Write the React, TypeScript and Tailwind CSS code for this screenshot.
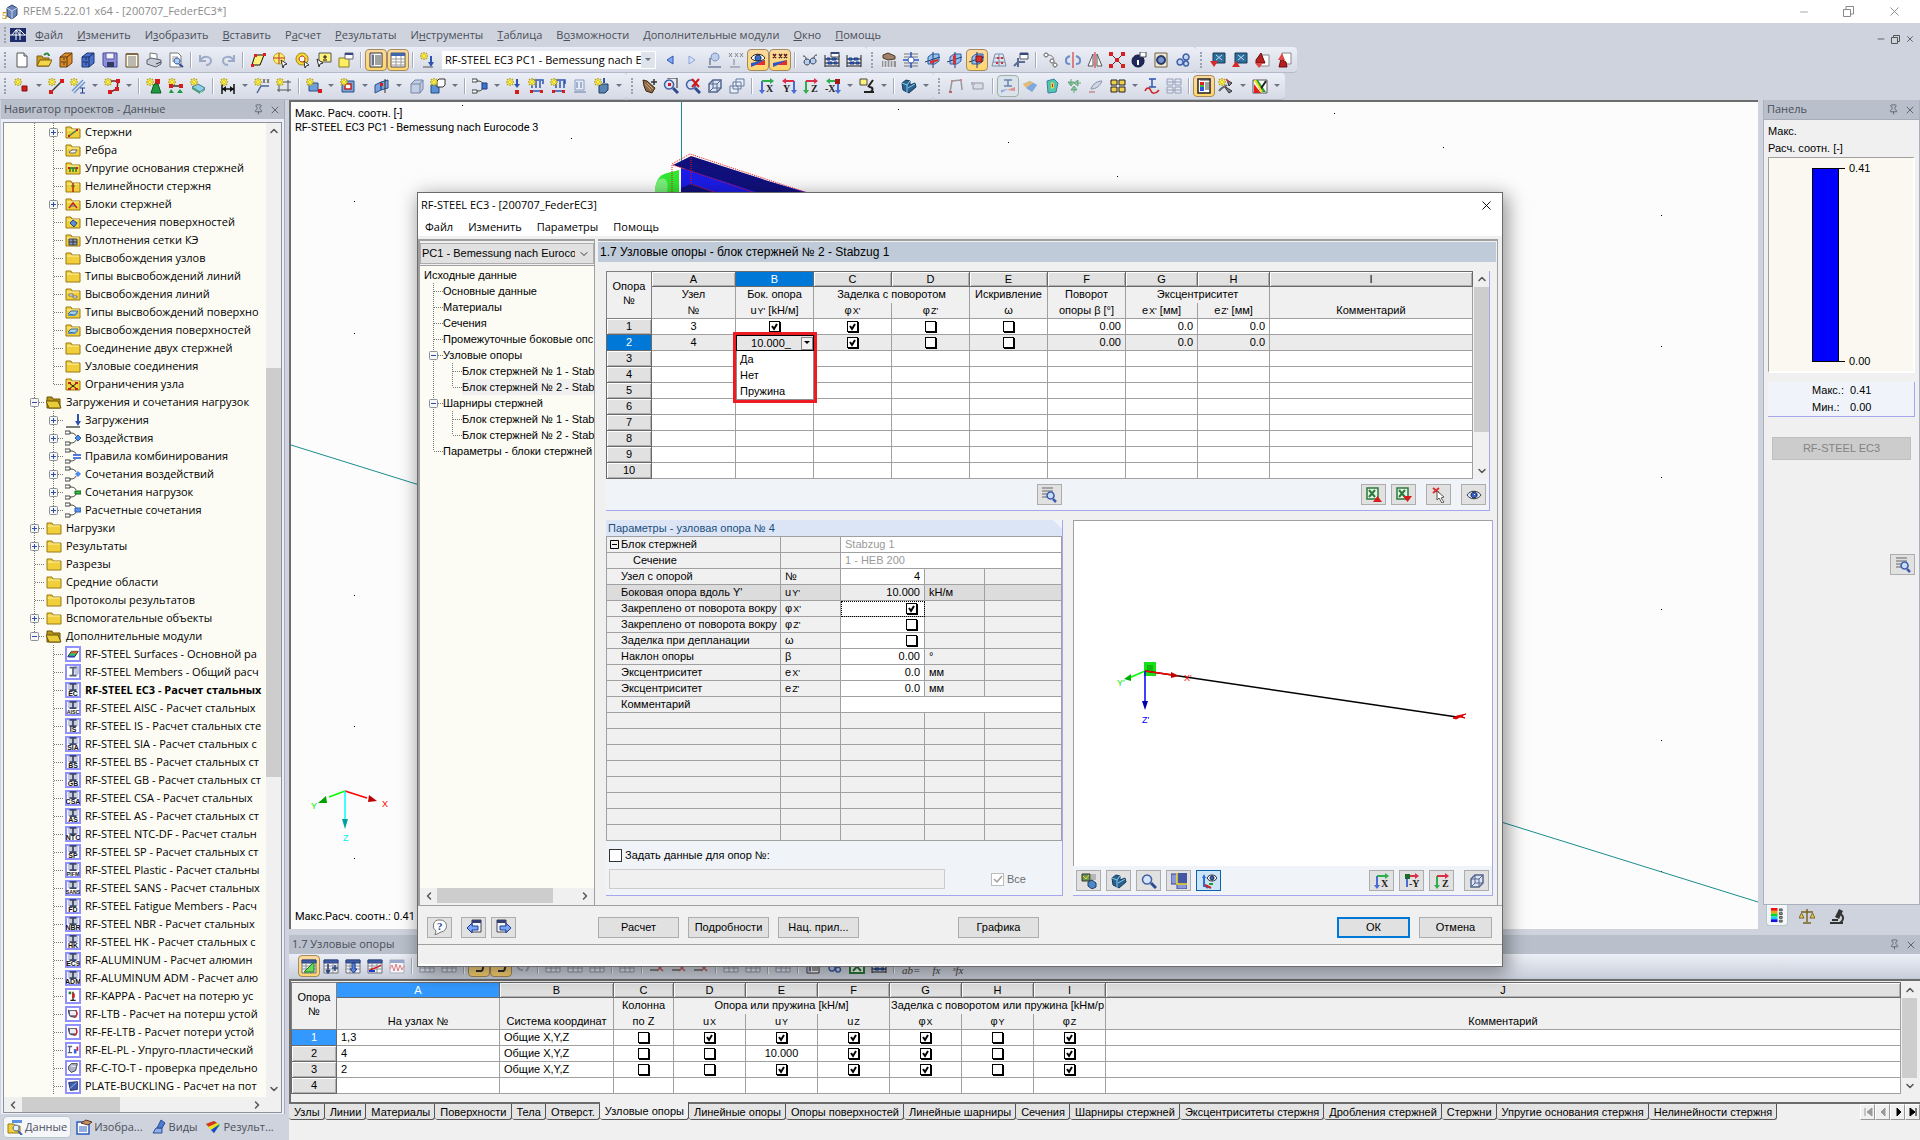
import { useState, type ReactNode } from "react";
import { clsx } from "clsx";
import { ChevronDown, ChevronLeft, ChevronRight, ChevronUp, Minus, Pin, X } from "lucide-react";

/* ---------- icons ---------- */

// one shape: [path, fill, stroke, stroke width]
type Shape = [string, string, string?, number?];
// one label: [text, x, y, size, colour]
type Label = [string, number, number, number, string];

const STAR: Shape[] = [
  ["M4 0v8M0 4h8M1 1l6 6M7 1l-6 6", "none", "#b8a818", 1.5],
  ["M4 1v6M1 4h6M2 2l4 4M6 2l-4 4", "none", "#fff04a", 1],
];
const GRID: Shape[] = [
  ["M1 2h14v13H1z", "#f4f4f4", "#6b6f78"],
  ["M1 2h14v3H1z", "#3c5ba8", "#2c4480"],
  ["M1 8h14M1 11h14M5 5v10M10 5v10", "none", "#8b8f98"],
];
const FOLDER: Shape[] = [
  ["M1 3h5l1 2h8v9H1z", "#f0cf3a", "#9a7a10"],
  ["M2 6h12", "none", "#fff4a8"],
];
const CHAIN: Shape[] = [
  ["M0 1h5v3H0zM0 12h5v3H0z", "#fff", "#444"],
  ["M5 3c4 0 5 1 6 3M5 13c4 0 5-1 6-3", "none", "#333"],
];
const PLANE: Shape[] = [
  ["M3 5l4-3h7v7l-4 3H3z", "#8fc0ee", "#2a5fa8"],
  ["M8 0v16M0 10l15-5", "none", "#223f70"],
];
const ABACUS: Shape[] = [
  ["M1 3v12M15 3v12M1 14h14M1 7h14M1 11h14", "none", "#222"],
  ["M3 6h3v2H3zM8 6h4v2H8zM4 10h4v2H4zM10 10h3v2h-3z", "#2f5fc0", "#1d3f88"],
];
const LENS: Shape[] = [
  ["M10 10l5 5", "none", "#2d4a92", 3],
  ["M6 2a4.500 4.500 0 1 0 .1 0z", "#d4e4fb", "#44609e", 1.5],
];
const CUBE: Shape[] = [
  ["M2 6l4-4h8v8l-4 4H2z", "#dce4f4", "#53658c", 1.5],
  ["M2 6h8l4-4M10 6v8M6 2v8L2 14M6 10h8", "none", "#53658c"],
];
const SOLID: Shape[] = [
  ["M1 5l4-3 4 1v4l5-2 1 4-7 6-6-3z", "#2a628c", "#123a60"],
  ["M1 5l5 2v8M6 7l3-4M7 10l7-4", "none", "#8cc8f0"],
];
const HAND: Shape[] = [["M2 3l5-2 7 3v3l-7 1-5-2z", "#a08068", "#4a3a2c"]];
const RAMP: Shape[] = [
  ["M1 15V11l14-3v1z", "#2b58c8"],
  ["M5 13l10-5v5z", "#e03030"],
];

const axes = (a: string, b: string): Shape[] => [
  ["M3 14V3", "none", b, 2],
  ["M3 3h10", "none", a, 2],
  ["M11 0l4 3-4 3z", a],
  ["M0 12h6l-3 4z", b],
];

const ICONS: Record<string, Shape[]> = {
  new: [["M3 1h7l3 3v11H3z", "#fff", "#555"], ["M10 1v3h3", "#ddd", "#555"]],
  open: [["M1 4h5l1 2h6v8H1z", "#c89c20", "#7c5c10"], ["M1 14l3-6h12l-3 6z", "#f3d548", "#7c5c10"], ["M8 3c3-3 5-1 5 1", "none", "#2a8a3a", 2]],
  cabOrange: [["M2 5l5-4h7v10l-5 4H2z", "#d98c2a", "#6e4210"], ["M2 5h7v10M9 5l5-4M3 10h5M5 7h2M5 12h2", "none", "#5c340c"]],
  cabBlue: [["M2 5l5-4h7v10l-5 4H2z", "#4b73cc", "#1c3470"], ["M2 5h7v10M9 5l5-4M3 10h5M5 7h2M5 12h2", "none", "#14285c"]],
  save: [["M1 1h14v14H3l-2-2z", "#8f8fe0", "#4b4b9a"], ["M4 1h8v6H4z", "#f2f2fb", "#5555a0"], ["M5 10h7v5H5z", "#333a60"]],
  report: [["M2 2h12v13H2z", "#fffbe8", "#5c4320"], ["M4 5h8M4 7h8M4 9h8M4 11h8M4 13h8", "none", "#777"], ["M2 1h12v2H2z", "#80684a"]],
  print: [["M4 1l7 1v6H4z", "#fff", "#777"], ["M1 8l4-2 10 2v4l-5 3-9-3z", "#c9ccd6", "#5a5f70"], ["M10 12l5-2", "none", "#383c4c"]],
  preview: [["M2 1h8l3 3v11H2z", "#fff", "#777"], ["M4 5h6M4 7h6M4 9h4", "none", "#999"], ["M11 12l4 3", "none", "#2d4a92", 2], ["M9 6a3 3 0 1 0 .1 0z", "#a8d0f8", "#2d4a92"]],
  undo: [["M2 3v6h6M2 9c3-6 11-5 11 0 0 3-3 4-5 4", "none", "#9aaac8", 2]],
  redo: [["M14 3v6H8M14 9C11 3 3 4 3 9c0 3 3 4 5 4", "none", "#9aaac8", 2]],
  poly: [["M5 3h9l-4 10H2z", "#fff27a", "#111"], ["M4 2h3v3H4zM13 1h3v3h-3zM1 12h3v3H1z", "#e02020"]],
  pick: [["M7 1a5.500 5.500 0 1 0 .1 0z", "#fff06a", "#b89c20"], ["M1 6h12M7 1v11", "none", "#c03030"], ["M9 8l6 4-3 1-1 3z", "#fff", "#333"]],
  ring: [["M8 1a6 6 0 1 0 .1 0z", "#f6de30", "#9a8210"], ["M8 4a3 3 0 1 0 .1 0z", "#fff", "#c02020"], ["M10 9l5 4-3 1-1 2z", "#fff", "#333"]],
  selpm: [["M3 1h12v9H3z", "#fff27a", "#555"], ["M9 3v4M7 5h4M7 8h4", "none", "#111"], ["M1 7l6 4-3 1-1 3z", "#fff", "#333"]],
  selwin: [["M1 6h10v9H1z", "#ffef60", "#8a7a20"], ["M7 1h8v6H7z", "#fff", "#667"], ["M7 1h8v2H7z", "#334a80"]],
  list: [["M2 1h12v14H2z", "#fff", "#333"], ["M7 4h6M7 6h6M7 8h6M7 10h6M7 12h6", "none", "#444"], ["M3 2h3v12H3z", "#b4c2e4"], ["M4 4h2M4 6h2M4 8h2M4 10h2M4 12h2", "none", "#222"]],
  tableIcon: [["M1 1h14v14H1z", "#fff", "#555"], ["M1 1h14v3H1z", "#3f66b0"], ["M1 7h14M1 10h14M1 13h14M6 4v11M11 4v11", "none", "#999"]],
  loadstar: [...STAR, ["M11 4v8", "none", "#2d55b0", 2], ["M8 10h6l-3 5z", "#2d55b0"], ["M3 15h10", "none", "#555"]],
  prev: [["M11 4v8L5 8z", "#86aaf0", "#2d55c0"]],
  next: [["M5 4v8l6-4z", "#d5e2f8", "#8aa2d8"]],
  eyeDown: [["M9 1a4 4 0 1 0 .1 0z", "#bcd0ee", "#7a90b8"], ["M4 6v7M2 15h13", "none", "#8c98b0", 2]],
  xxxDown: [["M1 1l3 4M4 1L1 5M7 1l3 4M10 1L7 5M12 1l3 4M15 1l-3 4", "none", "#888"], ["M6 7v6M2 15h10", "none", "#9aa2b4", 1.5]],
  eye: [["M1 6c3-5 11-5 14 0-3 4-11 4-14 0z", "#fff", "#222"], ["M8 3a3 3 0 1 0 .1 0z", "#3a6cd0", "#123"], ...RAMP],
  xxx: [["M1 2l3 4M4 2L1 6M7 2l3 4M10 2L7 6M12 2l3 4M15 2l-3 4", "none", "#5a2020", 1.5], ...RAMP],
  glasses: [["M1 4c3 0 3 2 3 4M15 3c-3 0-3 2-3 4", "none", "#333"], ["M5 7a3 3 0 1 0 .1 0zM11 6a3 3 0 1 0 .1 0z", "#b8cdf0", "#345"]],
  abacusDoc: [...ABACUS, ["M7 0h8v5H7z", "#fff", "#445"], ["M7 0h8v2H7z", "#334a80"]],
  abacus: ABACUS,
  gridHand: [["M1 10h14M1 12h14M1 14h14", "none", "#444", 1], ["M3 9v7M6 9v7M9 9v7M12 9v7", "none", "#fff"], ...HAND],
  gridPoint: [["M1 2h14M1 5h14M1 11h14M1 14h14", "none", "#777", 1], ["M8 0v16M0 8h16", "none", "#2d55c0", 1.5], ["M8 5a3 3 0 1 0 .1 0z", "#fff", "#2d55c0"]],
  planeX: [...PLANE, ["M5 9l8-2v2l-8 3z", "#d83030"]],
  planeY: [...PLANE, ["M6 4l3-2v9l-3 2z", "#d83030"]],
  planeZ: [...PLANE, ["M7 4h6v6H7z", "#d83030", "#7a1010"]],
  net: [["M4 2h8l3 12H1zM3 6h10M2 10h12M8 2v12", "none", "#7a8eb0"], ["M6 5h2v2H6zM10 5h2v2h-2zM5 10h2v2H5zM10 10h2v2h-2z", "#d83030"]],
  axesDoc: [["M5 15V6M5 10h7M5 10l-4 4", "none", "#5a6c94", 2], ["M7 1h8v6H7z", "#fff", "#556"], ["M7 1h8v2H7z", "#334a80"]],
  chain: [["M3 1a2 2 0 1 0 .1 0zM9 7a2 2 0 1 0 .1 0zM12 11a2 2 0 1 0 .1 0z", "#fff", "#555"], ["M5 3c4 0 5 2 6 4", "none", "#777"]],
  rotate: [["M8 0v16", "none", "#d02020"], ["M5 4c-6 2-5 8 0 8M11 4c6 2 5 8 0 8", "none", "#6a8cc8", 2]],
  mirror: [["M6 2v12H1zM10 2v12h5z", "#fff", "#555"], ["M8 0v16", "none", "#d02020"]],
  explode: [["M2 2l12 12M14 2L2 14", "none", "#333"], ["M0 0h4v4H0zM12 0h4v4h-4zM0 12h4v4H0zM12 12h4v4h-4zM6 6h4v4H6z", "#d82020"]],
  info: [["M7 3a6 6 0 1 0 .1 0z", "#20285c", "#10153a"], ["M7 8v5", "none", "#fff", 2], ["M9 0h6v5H9z", "#fff", "#445"]],
  gear: [["M2 1h12v14H2z", "#f2e8d0", "#6c6048"], ["M8 4a4 4 0 1 0 .1 0z", "#7895cc", "#283c70", 2]],
  cogs: [["M5 7a3 3 0 1 0 .1 0zM11 2a3 3 0 1 0 .1 0zM11 9a2.500 2.500 0 1 0 .1 0z", "#c4d4f4", "#3c5ca4", 1.5]],
  down1: [["M3 1h12v10H3z", "#2f6f9c", "#173a58"], ["M6 3l6 5M12 3L6 8", "none", "#bfe0f8"], ["M0 9h8l-4 6z", "#d82828"]],
  up1: [["M3 1h12v10H3z", "#2f6f9c", "#173a58"], ["M6 3l6 5M12 3L6 8", "none", "#bfe0f8"], ["M0 15h8l-4-6z", "#d82828"]],
  red1: [["M6 3h9v11H6z", "#fff", "#888"], ["M2 8l5-7 4 10H2z", "#b82020", "#6a1010"], ["M1 11h8l-4 5z", "#e04848"]],
  red2: [["M6 1h9v11H6z", "#fff", "#888"], ["M3 15l2-8 5 3 1 5z", "#b82020", "#6a1010"], ["M2 8l4-7 3 7z", "#e04848"]],
  node: [...STAR, ["M8 8h5v5H8z", "#d81c1c", "#801010"]],
  line: [...STAR, ["M3 14L14 3", "none", "#333", 1.5], ["M1 12h4v4H1zM12 1h4v4h-4z", "#d81c1c"]],
  member: [...STAR, ["M2 13L13 2M4 15L15 4", "none", "#6e96d0", 1.5], ["M10 10h5M12.500 10v5M10 15h5", "none", "#223f88"]],
  opening: [...STAR, ["M7 3h7l-1 8-7 3", "none", "#7a2020", 1.5], ["M12 1h4v4h-4zM11 9h4v4h-4zM4 12h4v4H4z", "#d81c1c"]],
  support: [["M9 1h5v5H9z", "#d81c1c"], ["M5 15l3-9h4l3 9z", "#1f9a40", "#0c5a20"], ...STAR],
  hinge: [...STAR, ["M2 8h13", "none", "#333", 1.5], ["M1 6h4v4H1zM11 6h4v4h-4z", "#d81c1c"], ["M1 15l2-4 3 4zM9 15l3-4 3 4z", "#1f9a40"]],
  surface: [["M2 9l6-3 7 4-5 4z", "#8cd0e8", "#3a7c98"], ["M2 9v2l8 5v-2zM10 16l5-4v-2", "#4aa070"], ...STAR],
  dim: [["M2 6v10M14 6v10M2 11h12", "none", "#111", 1.5], ["M2 11l4-3v6zM14 11l-4-3v6z", "#111"], ...STAR],
  dimXX: [...STAR, ["M9 1l2 4M11 1L9 5M13 1l2 4M15 1l-2 4", "none", "#666"], ["M3 15l4-7h8", "none", "#4a6496", 1.5]],
  guide: [["M3 2v12M12 2v12M1 4h14M1 12h14", "none", "#555"], ...STAR],
  rectLoad: [["M3 5h9v8H3z", "#6f9fd8", "#2a4f88"], ["M12 11h4v4h-4z", "#d81c1c"], ...STAR],
  frame: [["M2 3h12v11H2z", "#7aa4dc", "#2a4f88"], ["M5 6h6v5H5z", "#fff", "#c02020", 1.5], ...STAR],
  fold: [["M1 7l6-3v8l-6 3zM7 4l7-2v8l-7 2z", "#7aa4dc", "#2a4f88"], ["M11 1v14", "none", "#333"], ["M6 5h3v3H6z", "#d81c1c"]],
  block: [["M3 6l4-4h8v9l-3 4H3z", "#c4cee2", "#7484a8"], ["M3 6h9l3-4M12 6v9", "none", "#7484a8"]],
  block2: [["M1 7h8v8H1z", "#5a90d4", "#224a88"], ["M7 3l2-2h6v6l-2 2H7z", "#fff", "#333"], ...STAR],
  comb: [...CHAIN, ["M10 5h5v6h-5z", "#3c74d0", "#1c3c80"]],
  load1: [...STAR, ["M11 1v7", "none", "#2d55b0", 2], ["M8 6h6l-3 4z", "#2d55b0"], ["M9 12h4v4H9z", "#d81c1c"]],
  load2: [["M3 2h12v4M4 3v7M8 3v7M12 3v7M2 13h13", "none", "#2d55b0", 1.5], ["M2 12h3v3H2zM12 12h3v3h-3z", "#d81c1c"], ...STAR],
  load3: [["M5 2h10v4M6 3v7M10 3v7M14 3v7M2 13h13", "none", "#2d55b0", 1.5], ["M2 12h3v3H2zM12 12h3v3h-3z", "#d81c1c"], ...STAR],
  load4: [["M3 2h9v10H3z", "#e6ecf6", "#8a9cc0"], ["M5 4v6M9 4v6M2 14h12", "none", "#8a9cc0", 1.5]],
  cubeLoad: [["M5 8l3-2h6v6l-3 3H5z", "#5a84b4", "#1f3c60"], ["M10 0v5", "none", "#2d55b0", 2], ...STAR],
  hand: [["M2 2l4 1 8 7-3 5-6-2-2-5z", "#8a6a4a", "#3c2810"], ["M10 4h6M13 1v6", "none", "#333", 1.5], ["M4 6l6 6M6 5l6 6", "none", "#d0a070", 1]],
  zoomRect: [...LENS, ["M4 0h10v10", "none", "#222"], ["M5 5h3v3H5z", "#d81c1c"]],
  zoomX: [...LENS, ["M7 1l7 8M14 1L7 9", "none", "#d01818", 2]],
  lens: LENS,
  cube: CUBE,
  cubes: [["M7 1h8v7H7zM4 4h8v7H4zM1 8h8v7H1z", "#e8eefa", "#66789c"]],
  axX: axes("#2fae4c", "#4a6cd8"),
  axY: [["M13 14V3", "none", "#4a6cd8", 2], ["M13 3H4", "none", "#d83048", 2], ["M5 0L1 3l4 3z", "#d83048"], ["M10 12h6l-3 4z", "#4a6cd8"]],
  axZ: axes("#d83048", "#2fae4c"),
  axMX: [["M13 14V3", "none", "#4a6cd8", 2], ["M13 3H4", "none", "#2fae4c", 2], ["M5 0L1 3l4 3z", "#2fae4c"], ["M10 1h5v5h-5z", "#a01818"], ["M10 12h6l-3 4z", "#4a6cd8"]],
  axMY: [["M3 14V3", "none", "#4a6cd8", 2], ["M3 3h10", "none", "#d83048", 2], ["M11 0l4 3-4 3z", "#d83048"], ["M1 1h5v5H1z", "#1a6a2c"]],
  scope: [["M14 2L9 9M5 14h10M10 9c5 0 4 4 1 5", "none", "#222", 2], ["M1 1h7v6H1z", "#fff27a", "#444"]],
  solid: SOLID,
  portal: [["M2 14l2-11 9-1 1 10", "none", "#999", 1.5], ["M3 2h2v2H3zM12 1h2v2h-2z", "#c88"], ["M1 13h3v2H1z", "#b66"]],
  conveyor: [["M3 5h10v6H3z", "#d9dde6", "#9298a8"], ["M1 4h4v3H1z", "#b0b6c6"]],
  beamI: [["M4 2h8M8 2v6M4 8h8", "none", "#6a84b0", 1.5], ["M1 15V12l7-1z", "#96a8e0"], ["M7 12l8-3v4z", "#e09090"]],
  rainbow: [["M1 6l7-3 7 4-5 7z", "#78cc90"], ["M1 6l7-3 3 2-7 5z", "#e8b878"], ["M4 10l7-5 4 2-5 7z", "#80a8e0"]],
  rainbow2: [["M3 3l7-2 4 4-2 9-8 1z", "#50c8b0", "#3a80a0"], ["M7 4l3 1v5l-3 1z", "#f0d040"], ["M8 6h1v3H8z", "#e02020"]],
  greenArrows: [["M5 1v5M2 4l3 4 3-4zM15 5h-4M12 2L8 5l4 3zM8 15v-4M5 12l3-4 3 4z", "#8cc8a0", "#62a47a"]],
  blade: [["M3 11c2-6 7-8 11-8-2 5-6 8-11 8z", "#cfd6e4", "#8892ac"], ["M1 14h6", "none", "#c06060"]],
  squares: [["M1 2h6v5H1zM9 2h6v5H9zM1 9h6v5H1zM9 9h6v5H9z", "#f0cf4a", "#222"]],
  iWave: [["M5 1h7M8 1v8M5 9h7", "none", "#2d55b0", 1.5], ["M1 13c2-5 5-3 6 0s5 3 8-1", "none", "#d02020", 1.5]],
  tables: [["M1 1h6v6H1zM9 1h6v6H9zM1 9h6v6H1zM9 9h6v6H9z", "#e4e8f2", "#96a0b8"], ["M1 4h14M1 12h14", "none", "#96a0b8"]],
  legend: [["M2 1h12v14H2z", "#fff", "#222", 1.5], ["M4 4h4v3H4z", "#e02020"], ["M4 7h4v2H4z", "#30c040"], ["M4 9h4v4H4z", "#3050e0"], ["M9 5h4M9 7h4M9 9h4M9 11h4M4 2h9", "none", "#444"]],
  lamps: [["M9 2l5 3-3 3zM6 8l8 5-3 2z", "#7a86a0", "#333"], ["M1 13c3-4 5-4 8-6", "none", "#666", 2], ["M8 1l3 3", "none", "#d04040", 1.5], ...STAR],
  palette: [["M1 2h14v13H1z", "#fff", "#555"], ["M2 2h4l8 12h-4z", "#20a030"], ["M2 6l7 9H2z", "#e02020"], ["M14 3L8 12", "none", "#222", 2], ["M3 2l7 12", "none", "#f0e020", 2]],
  grTri: [...GRID, ["M13 4v10H3z", "#6ad85c", "#1c7a1c"]],
  grPM: [...GRID, ["M5 6v8M3 12l2 3 2-3M9 10h6M12 7v6", "none", "#2c4480", 1.5]],
  grDown: [...GRID, ["M7 5h3v6h2l-3.500 4L5 11h2z", "#5a84e0", "#1c3c88"]],
  grRamp: [...GRID, ["M2 13c4-4 8-2 12-6", "none", "#d02020", 1.5], ["M2 13h6", "none", "#1c3cd8", 2]],
  grWave: [["M1 2h14v13H1z", "#f6f6fa", "#a9aeba"], ["M1 2h14v3H1z", "#9aa8cc"], ["M1 11l2-4 2 6 2-7 2 7 2-6 2 5 2-4", "none", "#e08080"]],
  grPlain: [["M1 2h14v12H1z", "#e9ecf4", "#8d96ac"], ["M1 6h14M1 10h14M6 2v12M11 2v12", "none", "#8d96ac"]],
  swirl: [["M3 3c8 0 11 4 8 10M11 13H5", "none", "#333", 2]],
  swirlOff: [["M5 3c-4 4-3 9 3 9M8 3c6 2 7 6 3 10", "none", "#a0a8ba", 2]],
  rowDel: [["M1 12h8", "none", "#888", 2], ["M8 7l6 6M14 7l-6 6", "none", "#c06060", 1.5]],
  excel: [["M1 1h14v14H1z", "#fff", "#2a7a3a", 2], ["M4 4l8 9M12 4l-8 9", "none", "#2a7a3a", 2]],
  excelUp: [["M1 1h11v11H1z", "#e8f4e8", "#2a7a3a", 1.5], ["M3 3l6 7M9 3l-6 7", "none", "#2a7a3a", 2], ["M7 15h9l-4.500-6z", "#d81c1c"]],
  excelDown: [["M1 1h11v11H1z", "#e8f4e8", "#2a7a3a", 1.5], ["M3 3l6 7M9 3l-6 7", "none", "#2a7a3a", 2], ["M7 9h9l-4.500 6z", "#d81c1c"]],
  pickNode: [["M2 1l6 5M8 1L2 6", "none", "#d83030", 2], ["M6 4l7 6-3 1 3 4-2 1-3-5-2 2z", "#fff", "#555"]],
  eyeSmall: [["M1 8c3-5 11-5 14 0-3 5-11 5-14 0z", "#d8e4fa", "#444"], ["M8 5a3 3 0 1 0 .1 0z", "#3a60d0", "#123"], ["M8 7h1v1H8z", "#fff"]],
  find: [["M1 1h11M1 4h11M1 7h5M1 10h5", "none", "#666", 1], ["M12 12l3 3", "none", "#3c5cae", 2.500], ["M9.500 5a3.500 3.500 0 1 0 .1 0z", "#c8dcf8", "#3c5cae", 1.5]],
  render: [["M1 1h8v7H1z", "#6a9a50", "#333"], ["M2 3l3 3 3-4", "none", "#f0d040"], ["M9 2h6M9 4h6M9 6h6", "none", "#888"], ["M7 9l4-2 4 3v4l-4 2-4-3z", "#4a88c8", "#1c3c60"]],
  blueWin: [["M0 1h8v10H0z", "#8c98dc", "#3c4890"], ["M6 11h10v5H6z", "#8c98dc", "#3c4890"], ["M6 0h10v11H6z", "#4656a4"], ["M6 0v11h10", "none", "#f0e020", 1.5]],
  axesEye: [["M3 14V4M3 12l4 3", "none", "#2d6cd8", 2], ["M1 5l2-4 2 4z", "#2d6cd8"], ["M8 11h4", "none", "#20a030", 2], ["M4 12l6 3", "none", "#d02020", 2], ["M6 5c2-4 8-4 10 0-2 4-8 4-10 0z", "#fff", "#223"], ["M11 3a2 2 0 1 0 .1 0z", "#3a60d0", "#123"]],
  help: [["M8 1a6 6 0 0 1 1 12l-6 3 1-4A6 6 0 0 1 8 1z", "#fff", "#777"]],
  pagePrev: [["M6 1h9v12H6z", "#f4f6fc", "#445"], ["M6 1h9v3H6z", "#333f70"], ["M1 9l5-5v3h6v4H6v3z", "#7aa4f4", "#1c3c98"]],
  pageNext: [["M1 1h9v12H1z", "#f4f6fc", "#445"], ["M1 1h9v3H1z", "#333f70"], ["M15 9l-5-5v3H4v4h6v3z", "#7aa4f4", "#1c3c98"]],
  legendBars: [["M1 0h7v3H1z", "#f01010"], ["M1 3h7v3H1z", "#f0a010"], ["M1 6h7v3H1z", "#10d020"], ["M1 9h7v3H1z", "#10d0f0"], ["M1 12h7v3H1z", "#1010e0"], ["M10 1h3v2h-3zM10 5h3v2h-3zM10 9h3v2h-3zM10 13h3v2h-3z", "#aaa", "#444"]],
  scales: [["M8 1v13M4 15h8M2 4h12", "none", "#7a6420", 1.5], ["M0 10l2.500-5L5 10zM11 10l2.500-5L16 10z", "#e8cc60", "#7a6420"]],
  microscope: [["M10 1l4 2-4 8-4-2z", "#333"], ["M1 15h13M3 12h6M12 6c3 3 3 6-1 9", "none", "#333", 2]],
  folder: FOLDER,
  folderOpen: [["M1 3h5l1 2h7v9H1z", "#b89414", "#6a5208"], ["M0 7h12l3 7H3z", "#e8cc38", "#6a5208"]],
  folMember: [...FOLDER, ["M4 12l8-6", "none", "#3a7a50", 1.5], ["M3 11h2v2H3zM11 5h2v2h-2z", "#c02020"]],
  folRib: [...FOLDER, ["M4 10l3-2h5l-2 3H5z", "#fff", "#667"]],
  folFound: [...FOLDER, ["M4 8h8M5 8v4M8 8v4M11 8v4", "none", "#208030", 1.5], ["M3 7h2v2H3zM11 7h2v2h-2z", "#c02020"]],
  folNonlin: [...FOLDER, ["M8 5v9", "none", "#c02020", 1.5], ["M6 8h4", "none", "#208030"]],
  folSet: [...FOLDER, ["M4 12l4-5 4 5", "none", "#c02020", 1.5], ["M5 10h6", "none", "#667"]],
  folCross: [...FOLDER, ["M5 9l3-3 4 3-3 4z", "#5a90d8", "#224a88"]],
  folMesh: [...FOLDER, ["M4 7h8v6H4z", "#8898b8", "#445"], ["M8 7v6M4 10h8", "none", "#334"]],
  folRelease: [...FOLDER, ["M4 8h4v2H4zM8 10h4v2H8z", "#fff", "#777"]],
  folSurf: [...FOLDER, ["M3 10l3-3h7l-3 4z", "#a8d4f4", "#3a6c98"], ["M3 10v2h7l3-3v-2l-3 4H3z", "#5a94c4"]],
  folNode: [...FOLDER, ["M4 7l8 6M12 7l-8 6", "none", "#222"], ["M3 6h3v2H3zM10 6h3v2h-3zM3 12h3v2H3zM10 12h3v2h-3z", "#c02020"]],
  loadCase: [["M13 2v8", "none", "#2d55b0", 2], ["M10 9h6l-3 5z", "#2d55b0"], ["M1 15h14", "none", "#555", 1.5]],
  actions: [...CHAIN, ["M13 5l3 3-3 3-3-3z", "#4c8cf0", "#2c5cb0"]],
  rules: [...CHAIN, ["M8 7h8M8 10h8", "none", "#4c7ce0", 2]],
  actComb: [...CHAIN, ["M13 5l3 3-3 3-3-3z", "#4c8cf0"]],
  loadComb: [...CHAIN, ["M10 7h6v3h-6z", "#30c040", "#106020"]],
  resComb: [...CHAIN, ["M10 6h6v4h-6z", "#5c94e8", "#2c5cb0"]],
  tabData: [["M1 5h6l1 2h5v7H1z", "#f0cf3a", "#9a7a10"], ["M5 1h10v3H5z", "#5a90e0"], ["M11 12l4 4", "none", "#44609e", 2], ["M9 6a3 3 0 1 0 .1 0z", "#e4f0ff", "#44609e"]],
  tabView: [["M1 3h12v12H1z", "#fff", "#2d5cc0", 1.5], ["M3 8h8M3 10h8M3 12h8", "none", "#2d5cc0"], ["M5 4l5-3 6 2-4 3z", "#c29064", "#5a3a20"]],
  tabCam: [["M2 14l3-5h6v5z", "#8cb0e8", "#2c4c98"], ["M6 9l4-8 4 3-3 5z", "#4c7cd0", "#2c4c98"]],
  tabRes: [["M1 5l8-3 6 4-6 8z", "#30c050"], ["M1 5l8-3 3 2-8 4z", "#e03020"], ["M3 8l9-4 2 1-8 6z", "#f0e020"], ["M6 11l8-5-5 8z", "#2040e0"]],
  app: [["M5 4l5-3 5 3v7l-5 4-5-3z", "#6a86b8", "#28406c"], ["M5 4l5 3v8M10 7l5-3", "none", "#c4d4ee"]],
  bridge: [["M0 1h16v14H0z", "#1c2c6c"], ["M0 8h16M2 8l4-5 4 5M6 3v10M6 3h4M10 3v10M10 3l5 5", "none", "#fff"]],
  surfMod: [["M2 11l4-6h8l-4 6z", "#30c070", "#222"], ["M6 5h8l-2 2H5z", "#e06020"], ["M3 10h7v2H3z", "#3040c0"]],
  iBeam: [["M9 2h5v8l-4 3", "#c4cad8", "#a8b0c4"], ["M4 3h8M8 3v8M4 12h8", "none", "#53617e", 2]],
  iTag: [["M2 1h12v7H2z", "#c8cddb"], ["M4 1h8M8 1v6M4 8h8", "none", "#3c486a", 2]],
  kappa: [["M8 3v10M5 13h6", "none", "#222", 1.5], ["M3 3h3v3H3z", "#208030"], ["M7 5h3v5H7z", "#d02020"]],
  ltb: [["M3 3c0 7 2 9 9 8", "none", "#445", 1.5], ["M4 4h8v6H4z", "#ececf4", "#556"], ["M11 4c3 3 2 6-2 8", "none", "#d02020", 1.5]],
  elpl: [["M2 4h5M4 4v7M2 11h5", "none", "#53617e", 1.5], ["M9 7h3v5H9z", "#3060e0"], ["M12 4h2v5h-2z", "#d02020"]],
  ctot: [["M3 6l3-3h7l-2 8-5 2-3-3z", "#aab2c6", "#334"], ["M6 6h5", "none", "#fff"]],
  plate: [["M3 4l10-1v9l-8 1z", "#3c5cae", "#1c2c5c"], ["M3 12l9-8", "none", "#a8c0f0"]],
};

const ICON_LABELS: Record<string, Label[]> = {
  axX: [["X", 7, 14, 10, "#222"]],
  axY: [["Y", 2, 14, 10, "#222"]],
  axZ: [["Z", 8, 14, 10, "#222"]],
  axMX: [["-X", 0, 14, 10, "#222"]],
  axMY: [["-Y", 5, 14, 10, "#222"]],
  help: [["?", 5, 11, 11, "#2848a0"]],
  app: [["5", 0, 15, 11, "#c89c10"]],
};

function Icon({ name, size = 16, tag }: { name: string; size?: number; tag?: string }) {
  return (
    <svg width={size} height={size} viewBox="0 0 16 16" className="shrink-0" aria-hidden="true">
      {ICONS[name].map(([d, fill, stroke, w], i) => (
        <path key={i} d={d} fill={fill} stroke={stroke ?? "none"} strokeWidth={w ?? 1} />
      ))}
      {(ICON_LABELS[name] ?? []).map(([t, x, y, s, c]) => (
        <text key={t} x={x} y={y} fontSize={s} fill={c} fontFamily="Liberation Serif, serif" fontWeight="bold">
          {t}
        </text>
      ))}
      {tag && (
        <text x="8" y="15" fontSize={tag.length > 3 ? 6 : 8} textAnchor="middle" fontFamily="Liberation Sans, sans-serif" fontWeight="bold" fill="#111">
          {tag}
        </text>
      )}
    </svg>
  );
}

/* ---------- toolbars ---------- */

// "|" separator, "name*" active, "name~" pressed but disabled, "name v" with a drop-down arrow
function ToolItem({ spec }: { spec: string }) {
  if (spec === "|") return <span className="mx-[3px] h-4 w-[2px] border-l border-[#a4acbc] bg-white" />;
  const name = spec.replace(/[*~]| v/g, "");
  return (
    <span className="flex items-center">
      <button
        type="button"
        aria-label={name}
        className={clsx(
          "flex h-[22px] w-[22px] items-center justify-center",
          spec.includes("*") && "rounded-sm border border-[#a58a5c] bg-gradient-to-b from-[#fbd9a0] to-[#ffd66b]",
          spec.includes("~") && "rounded-sm border border-[#9fb0ac] bg-[#dbe3ea]",
        )}
      >
        <Icon name={name} />
      </button>
      {spec.endsWith(" v") && (
        <svg width="12" height="6" viewBox="0 0 12 6" aria-hidden="true">
          <path d="M3 1h6L6 4z" fill="#6c7484" />
        </svg>
      )}
    </span>
  );
}

function Bar({ items, children, after }: { items: string[]; children?: ReactNode; after?: string[] }) {
  return (
    <div className="flex h-full shrink-0 items-center rounded-r border-b border-[#b4bac8] bg-gradient-to-b from-[#eceff7] to-[#d6dae5] pr-[2px]">
      <span className="ml-1 mr-[5px] h-4 border-l-2 border-dotted border-[#9aa2b2]" />
      {items.map((s, i) => (
        <ToolItem key={i} spec={s} />
      ))}
      {children}
      {after?.map((s, i) => (
        <ToolItem key={i} spec={s} />
      ))}
    </div>
  );
}

/* ---------- trees ---------- */

type Mark = "line" | "tee" | "end" | "plus" | "minus" | "plusEnd" | "minusEnd" | "none";

function Guide({ mark, h }: { mark: Mark; h: number }) {
  const m = h / 2;
  const last = mark.endsWith("nd");
  const box = mark.startsWith("plus") || mark.startsWith("minus");
  if (mark === "none") return <span className="w-[19px] shrink-0" />;
  return (
    <svg width="19" height={h} className="shrink-0" aria-hidden="true">
      <path d={`M9.500 0V${last ? m : h}`} stroke="#777" strokeDasharray="1 1" />
      {mark !== "line" && <path d={`M10 ${m + 0.5}H19`} stroke="#777" strokeDasharray="1 1" />}
      {box && (
        <>
          <rect x="5.500" y={m - 3.5} width="8" height="8" rx="1" fill="#f6f6f6" stroke="#8a8f98" />
          <path d={`M7 ${m + 0.5}h5` + (mark.startsWith("plus") ? `M9.500 ${m - 2}v5` : "")} stroke="#2c4ca8" />
        </>
      )}
    </svg>
  );
}

type NavRow = { a: Mark; b?: Mark; icon: string; text: string; tag?: string; module?: boolean; bold?: boolean };

const objects: [string, string][] = [
  ["folMember", "Стержни"],
  ["folRib", "Ребра"],
  ["folFound", "Упругие основания стержней"],
  ["folNonlin", "Нелинейности стержня"],
  ["folSet", "Блоки стержней"],
  ["folCross", "Пересечения поверхностей"],
  ["folMesh", "Уплотнения сетки КЭ"],
  ["folder", "Высвобождения узлов"],
  ["folder", "Типы высвобождений линий"],
  ["folRelease", "Высвобождения линий"],
  ["folSurf", "Типы высвобождений поверхно"],
  ["folSurf", "Высвобождения поверхностей"],
  ["folder", "Соединение двух стержней"],
  ["folder", "Узловые соединения"],
  ["folNode", "Ограничения узла"],
];

const loads: [string, string][] = [
  ["loadCase", "Загружения"],
  ["actions", "Воздействия"],
  ["rules", "Правила комбинирования"],
  ["actComb", "Сочетания воздействий"],
  ["loadComb", "Сочетания нагрузок"],
  ["resComb", "Расчетные сочетания"],
];

const modules: [string, string, string?][] = [
  ["surfMod", "RF-STEEL Surfaces - Основной ра"],
  ["iBeam", "RF-STEEL Members - Общий расч"],
  ["iTag", "RF-STEEL EC3 - Расчет стальных", "EC"],
  ["iTag", "RF-STEEL AISC - Расчет стальных", "AISC"],
  ["iTag", "RF-STEEL IS - Расчет стальных сте", "IS"],
  ["iTag", "RF-STEEL SIA - Расчет стальных с", "SIA"],
  ["iTag", "RF-STEEL BS - Расчет стальных ст", "BS"],
  ["iTag", "RF-STEEL GB - Расчет стальных ст", "GB"],
  ["iTag", "RF-STEEL CSA - Расчет стальных", "CSA"],
  ["iTag", "RF-STEEL AS - Расчет стальных ст", "AS"],
  ["iTag", "RF-STEEL NTC-DF - Расчет стальн", "NTC"],
  ["iTag", "RF-STEEL SP - Расчет стальных ст", "SP"],
  ["iTag", "RF-STEEL Plastic - Расчет стальны", "PIFM"],
  ["iTag", "RF-STEEL SANS - Расчет стальных", "SANS"],
  ["iTag", "RF-STEEL Fatigue Members - Расч", "FD"],
  ["iTag", "RF-STEEL NBR - Расчет стальных", "NBR"],
  ["iTag", "RF-STEEL HK - Расчет стальных с", "HK"],
  ["iTag", "RF-ALUMINUM - Расчет алюмин", "EC9"],
  ["iTag", "RF-ALUMINUM ADM - Расчет алю", "ADM"],
  ["kappa", "RF-KAPPA - Расчет на потерю ус"],
  ["ltb", "RF-LTB - Расчет на потерш устой"],
  ["ltb", "RF-FE-LTB - Расчет потери устой"],
  ["elpl", "RF-EL-PL - Упруго-пластический"],
  ["ctot", "RF-C-TO-T - проверка предельно"],
  ["plate", "PLATE-BUCKLING - Расчет на пот"],
];

const navRows: NavRow[] = [
  ...objects.map(([icon, text], i): NavRow => ({
    a: "line",
    b: i === 14 ? "end" : i === 0 || i === 4 ? "plus" : "tee",
    icon,
    text,
  })),
  { a: "minus", icon: "folderOpen", text: "Загружения и сочетания нагрузок" },
  ...loads.map(([icon, text], i): NavRow => ({ a: "line", b: i === 5 ? "plusEnd" : "plus", icon, text })),
  { a: "plus", icon: "folder", text: "Нагрузки" },
  { a: "plus", icon: "folder", text: "Результаты" },
  { a: "tee", icon: "folder", text: "Разрезы" },
  { a: "tee", icon: "folder", text: "Средние области" },
  { a: "tee", icon: "folder", text: "Протоколы результатов" },
  { a: "plus", icon: "folder", text: "Вспомогательные объекты" },
  { a: "minusEnd", icon: "folderOpen", text: "Дополнительные модули" },
  ...modules.map(([icon, text, tag]): NavRow => ({
    a: "none",
    b: "tee",
    icon,
    text,
    tag,
    module: true,
    bold: tag === "EC",
  })),
];

function PaneHeader({ title }: { title: string }) {
  return (
    <div className="flex h-[19px] shrink-0 items-center justify-between bg-[#b9c0cb] pl-[3px] pr-[3px] text-[#4a4f5a]">
      <h2>{title}</h2>
      <span className="flex items-center gap-[5px] text-[#5f6672]">
        <button type="button" aria-label="Закрепить">
          <Pin size={11} />
        </button>
        <button type="button" aria-label="Закрыть">
          <X size={12} />
        </button>
      </span>
    </div>
  );
}

function HScroll({ thumb }: { thumb: string }) {
  return (
    <div className="flex h-[15px] shrink-0 items-center justify-between bg-[#f0f0f0] px-[3px] text-[#555]">
      <ChevronLeft size={12} strokeWidth={3} />
      <span className={clsx("mr-auto h-full bg-[#cdcdcd]", thumb)} />
      <ChevronRight size={12} strokeWidth={3} />
    </div>
  );
}

function VScroll({ children, className }: { children: ReactNode; className?: string }) {
  return (
    <div className={clsx("flex w-[15px] shrink-0 flex-col items-center bg-[#f0f0f0] text-[#555]", className)}>
      <ChevronUp size={12} strokeWidth={3} className="my-[2px] shrink-0" />
      <div className="flex w-full flex-1 flex-col">{children}</div>
      <ChevronDown size={12} strokeWidth={3} className="my-[2px] shrink-0" />
    </div>
  );
}

const navTabs: [string, string][] = [
  ["tabData", "Данные"],
  ["tabView", "Изобра..."],
  ["tabCam", "Виды"],
  ["tabRes", "Результ..."],
];

function Navigator() {
  const [tab, setTab] = useState("Данные");
  return (
    <aside className="flex w-[289px] shrink-0 flex-col pl-px pr-1">
      <div className="flex min-h-0 flex-1 flex-col border-r border-[#a5adbb] bg-[#eceff7]">
        <PaneHeader title="Навигатор проектов - Данные" />
        <div className="mx-[2px] mb-px mt-[3px] flex min-h-0 flex-1 flex-col border border-[#8d9096] bg-[#fcfcf4]">
          <div className="flex min-h-0 flex-1">
            <ul className="min-w-0 flex-1 overflow-hidden pl-[21px] text-black">
              {navRows.map((r) => (
                <li key={r.text} className={clsx("flex h-[18px] items-center whitespace-nowrap", r.bold && "font-bold")}>
                  <Guide mark={r.a} h={18} />
                  {r.b && <Guide mark={r.b} h={18} />}
                  <span className={clsx("ml-[2px] mr-1 flex h-4 w-4 shrink-0 items-center justify-center", r.module && "border-2 border-[#9090ff] bg-white")}>
                    <Icon name={r.icon} size={r.module ? 14 : 16} tag={r.tag} />
                  </span>
                  {r.text}
                </li>
              ))}
            </ul>
            <VScroll>
              <span className="flex-[55]" />
              <span className="flex-[98] bg-[#cdcdcd]" />
              <span className="flex-[73]" />
            </VScroll>
          </div>
          <div className="bg-[#f0f0f0] pr-[15px]">
            <HScroll thumb="ml-[3px] w-[98px]" />
          </div>
        </div>
      </div>
      <div className="flex h-[26px] shrink-0 items-center gap-[2px] pl-[2px] text-[#4a4f5a]">
        {navTabs.map(([icon, label]) => (
          <button
            key={label}
            type="button"
            onClick={() => setTab(label)}
            className={clsx(
              "flex h-[22px] items-center gap-[2px] whitespace-nowrap px-[3px]",
              tab === label && "rounded border border-[#b6c8cc] bg-[#f4f6fa]",
            )}
          >
            <Icon name={icon} />
            {label}
          </button>
        ))}
      </div>
    </aside>
  );
}

/* ---------- data grids ---------- */

function Check({ label, on = false }: { label: string; on?: boolean }) {
  const [checked, setChecked] = useState(on);
  return (
    <label className="relative mx-auto block h-[11px] w-[11px] leading-none">
      <input
        type="checkbox"
        aria-label={label}
        checked={checked}
        onChange={(e) => setChecked(e.target.checked)}
        className="block h-[11px] w-[11px] appearance-none border border-black bg-white shadow-[1px_1px_0_#000]"
      />
      {checked && (
        <svg viewBox="0 0 11 11" className="pointer-events-none absolute inset-0" aria-hidden="true">
          <path d="M3 5l2 3 3-5" fill="none" stroke="#000" strokeWidth="2" />
        </svg>
      )}
    </label>
  );
}

function Sub({ base, sub, unit }: { base: string; sub?: string; unit?: string }) {
  return (
    <>
      {base}
      {sub && <span className="ml-px text-[9px] leading-none">{sub}</span>}
      {unit && " " + unit}
    </>
  );
}

type Col = { w?: string; unit: ReactNode; align?: string };
type Group = { label: string; span: number };

function Grid({
  cols,
  groups,
  rows,
  activeCol,
  activeRow,
  rowTint,
  accent,
}: {
  cols: Col[];
  groups: Group[];
  rows: ReactNode[][];
  activeCol: number;
  activeRow: number;
  rowTint?: string;
  accent: string;
}) {
  const raised = "bg-[#e1e1e1] shadow-[inset_1px_1px_0_#fff,inset_-1px_-1px_0_#b0b0b0]";
  return (
    <table className="w-full table-fixed border-collapse border border-[#696969] bg-white text-center leading-[15px]">
      <colgroup>
        <col className="w-[45px]" />
        {cols.map((c, i) => (
          <col key={i} className={c.w} />
        ))}
      </colgroup>
      <thead className="bg-[#f0f0f0]">
        <tr className="h-[15px] leading-[13px]">
          <th rowSpan={3} className="border border-[#808080] p-0 pb-1 align-middle font-normal leading-[14px]">
            Опора
            <br />№
          </th>
          {cols.map((_, i) => (
            <th key={i} className={clsx("border border-[#696969] p-0 font-normal", i === activeCol ? clsx("text-white", accent) : raised)}>
              {String.fromCharCode(65 + i)}
            </th>
          ))}
        </tr>
        <tr className="h-4">
          {groups.map((g, i) => (
            <th key={i} colSpan={g.span} className="whitespace-nowrap border-x border-[#a0a0a0] p-0 font-normal">
              {g.label}
            </th>
          ))}
        </tr>
        <tr className="h-4">
          {cols.map((c, i) => (
            <th key={i} className="whitespace-nowrap border border-t-0 border-[#a0a0a0] p-0 font-normal">
              {c.unit}
            </th>
          ))}
        </tr>
      </thead>
      <tbody>
        {rows.map((r, y) => (
          <tr key={y} className={clsx("h-4", y === activeRow && rowTint)}>
            <th className={clsx("border border-[#696969] p-0 font-normal", y === activeRow ? clsx("text-white", accent) : raised)}>{y + 1}</th>
            {cols.map((c, x) => (
              <td key={x} className={clsx("border border-[#a0a0a0] px-1 py-0 leading-[13px]", c.align)}>
                {r[x]}
              </td>
            ))}
          </tr>
        ))}
      </tbody>
    </table>
  );
}

/* ---------- dialog ---------- */

function SpringCell() {
  const [value, setValue] = useState("10.000_");
  return (
    <div className="relative -mx-1 h-[15px]">
      <div className="absolute -left-[3px] -top-[3px] z-10 w-[84px] border-[3px] border-[#ed1c24] bg-white text-left">
        <div className="flex h-[16px] items-center border border-black bg-[#e6e6e6]">
          <input
            aria-label="Бок. опора"
            value={value}
            onChange={(e) => setValue(e.target.value)}
            className="w-full min-w-0 bg-transparent pl-1 text-center outline-none"
          />
          <button type="button" aria-label="Список" className="flex h-[13px] w-3 shrink-0 items-center justify-center border border-[#888] bg-[#f0f0f0]">
            <svg width="6" height="4" aria-hidden="true">
              <path d="M0 0h6L3 3z" fill="#000" />
            </svg>
          </button>
        </div>
        <div className="flex flex-col items-start border-x border-b border-[#8d8d8d]">
          {["Да", "Нет", "Пружина"].map((o) => (
            <button key={o} type="button" onClick={() => setValue(o)} className="h-4 w-full px-[3px] text-left">
              {o}
            </button>
          ))}
        </div>
      </div>
    </div>
  );
}

const supportCols: Col[] = [
  { w: "w-[84px]", unit: "№" },
  { w: "w-[78px]", unit: <Sub base="u" sub="Y'" unit="[kН/м]" /> },
  { w: "w-[78px]", unit: <Sub base="φ" sub="X'" /> },
  { w: "w-[78px]", unit: <Sub base="φ" sub="Z'" /> },
  { w: "w-[78px]", unit: "ω" },
  { w: "w-[78px]", unit: "опоры β [°]", align: "text-right" },
  { w: "w-[72px]", unit: <Sub base="e" sub="X'" unit="[мм]" />, align: "text-right" },
  { w: "w-[72px]", unit: <Sub base="e" sub="Z'" unit="[мм]" />, align: "text-right" },
  { unit: "Комментарий" },
];

const supportGroups: Group[] = [
  { label: "Узел", span: 1 },
  { label: "Бок. опора", span: 1 },
  { label: "Заделка с поворотом", span: 2 },
  { label: "Искривление", span: 1 },
  { label: "Поворот", span: 1 },
  { label: "Эксцентриситет", span: 2 },
  { label: "", span: 1 },
];

const supportRows: ReactNode[][] = [
  ["3", <Check label="1 B" on />, <Check label="1 C" on />, <Check label="1 D" />, <Check label="1 E" />, "0.00", "0.0", "0.0"],
  ["4", <SpringCell />, <Check label="2 C" on />, <Check label="2 D" />, <Check label="2 E" />, "0.00", "0.0", "0.0"],
  ...Array.from({ length: 8 }, () => []),
];

const dialogTree: { a?: Mark; b?: Mark; text: string; active?: boolean }[] = [
  { text: "Исходные данные" },
  { a: "tee", text: "Основные данные" },
  { a: "tee", text: "Материалы" },
  { a: "tee", text: "Сечения" },
  { a: "tee", text: "Промежуточные боковые опс" },
  { a: "minus", text: "Узловые опоры" },
  { a: "line", b: "tee", text: "Блок стержней № 1 - Stab" },
  { a: "line", b: "end", text: "Блок стержней № 2 - Stab", active: true },
  { a: "minus", text: "Шарниры стержней" },
  { a: "line", b: "tee", text: "Блок стержней № 1 - Stab" },
  { a: "line", b: "end", text: "Блок стержней № 2 - Stab" },
  { a: "end", text: "Параметры - блоки стержней" },
];

type Param = { name: string; sym?: ReactNode; value?: ReactNode; unit?: string; wide?: boolean; kind?: "head" | "child" | "active" | "focus" };

const params: Param[] = [
  { name: "Блок стержней", value: "Stabzug 1", wide: true, kind: "head" },
  { name: "Сечение", value: "1 - HEB 200", wide: true, kind: "child" },
  { name: "Узел с опорой", sym: "№", value: "4" },
  { name: "Боковая опора вдоль Y'", sym: <Sub base="u" sub="Y'" />, value: "10.000", unit: "kН/м", kind: "active" },
  { name: "Закреплено от поворота вокру", sym: <Sub base="φ" sub="X'" />, value: <Check label="Закреплено от поворота X" on />, kind: "focus" },
  { name: "Закреплено от поворота вокру", sym: <Sub base="φ" sub="Z'" />, value: <Check label="Закреплено от поворота Z" /> },
  { name: "Заделка при депланации", sym: "ω", value: <Check label="Заделка при депланации" /> },
  { name: "Наклон опоры", sym: "β", value: "0.00", unit: "°" },
  { name: "Эксцентриситет", sym: <Sub base="e" sub="X'" />, value: "0.0", unit: "мм" },
  { name: "Эксцентриситет", sym: <Sub base="e" sub="Z'" />, value: "0.0", unit: "мм" },
  { name: "Комментарий", value: "", wide: true },
  ...Array.from({ length: 8 }, () => ({ name: "" })),
];

function ParamTable() {
  const cell = "whitespace-nowrap border border-[#a0a0a0] py-0 pl-1 font-normal";
  return (
    <table className="w-full table-fixed border-collapse bg-[#f0f0f0] leading-[13px]">
      <colgroup>
        <col className="w-[174px]" />
        <col className="w-[60px]" />
        <col className="w-[84px]" />
        <col className="w-[60px]" />
        <col />
      </colgroup>
      <tbody>
        {params.map((p, i) => (
          <tr key={i} className={clsx("h-4", p.kind === "active" && "bg-[#dcdcdc]")}>
            <th className={clsx(cell, "pr-0")}>
              <span className={clsx("flex items-center text-left", p.kind === "child" ? "pl-[22px]" : p.kind !== "head" && "pl-[10px]")}>
                {p.kind === "head" && (
                  <svg width="11" height="11" className="-ml-[2px] mr-px shrink-0" aria-hidden="true">
                    <path d="M1.500 1.500h8v8h-8zM3 5.500h5" fill="none" stroke="#000" />
                  </svg>
                )}
                {p.name}
              </span>
            </th>
            <td className={cell}>{p.sym}</td>
            {p.wide ? (
              <td colSpan={3} className={clsx(cell, "bg-white text-[#9a9a9a]")}>
                {p.value}
              </td>
            ) : (
              <>
                <td
                  className={clsx(
                    cell,
                    "pr-1 text-right",
                    p.name && p.kind !== "active" && "bg-white",
                    p.kind === "active" && "bg-[#ececec]",
                    p.kind === "focus" && "outline-1 -outline-offset-1 outline-dotted outline-black",
                  )}
                >
                  {typeof p.value === "object" ? <span className="flex justify-end pl-[60px] pr-[2px]">{p.value}</span> : p.value}
                </td>
                <td className={cell}>{p.unit}</td>
                <td className={cell} />
              </>
            )}
          </tr>
        ))}
      </tbody>
    </table>
  );
}

function IconButton({ name, active }: { name: string; active?: boolean }) {
  return (
    <button
      type="button"
      aria-label={name}
      className={clsx(
        "flex h-[21px] w-[25px] shrink-0 items-center justify-center border",
        active ? "border-[#0a64ad] bg-[#cce4f7]" : "border-[#adadad] bg-[#e1e1e1]",
      )}
    >
      <Icon name={name} />
    </button>
  );
}

function PushButton({ children, className }: { children: ReactNode; className?: string }) {
  return (
    <button type="button" className={clsx("h-[21px] shrink-0 whitespace-nowrap", className)}>
      {children}
    </button>
  );
}

function SupportPreview() {
  return (
    <svg className="min-h-0 w-full flex-1" aria-hidden="true">
      <rect x="70" y="141" width="12" height="14" fill="#18e018" />
      <rect x="73" y="144" width="6" height="7" fill="#10b810" />
      <path d="M71 150L383 196" stroke="#000" strokeWidth="1.500" />
      <path d="M71 150l28 4" stroke="#f00" strokeWidth="1.500" />
      <path d="M97 151l8 4-8 2z" fill="#c00000" />
      <path d="M71 150L55 157" stroke="#0f0" strokeWidth="1.500" />
      <path d="M57 153l-7 5 7 2z" fill="#00b000" />
      <path d="M71 150v32" stroke="#00f" strokeWidth="1.500" />
      <path d="M68 180h6l-3 9z" fill="#0000b0" />
      <path d="M379 197l4-2 9-2-5 2 4 2-5-1-4 2z" fill="#d00" stroke="#d00" />
      <g fontSize="9" fontFamily="Liberation Sans, sans-serif">
        <text x="110" y="160" fill="#f00">X'</text>
        <text x="43" y="165" fill="#0e0">Y'</text>
        <text x="68" y="202" fill="#00f">Z'</text>
      </g>
    </svg>
  );
}

function Dialog() {
  const [all, setAll] = useState(false);
  const plain = "border border-[#adadad] bg-[#e1e1e1]";
  return (
    <section
      role="dialog"
      aria-label="RF-STEEL EC3"
      className="absolute left-[417px] top-[192px] flex h-[775px] w-[1086px] flex-col border border-[#6b6b6b] bg-[#f0f0f0] font-[Liberation_Sans,sans-serif] text-black shadow-[3px_5px_18px_2px_rgba(0,0,0,0.4)]"
    >
      <header className="shrink-0 bg-white font-[Open_Sans,sans-serif]">
        <div className="flex h-[25px] items-center justify-between pl-[3px] pr-2">
          <h1>RF-STEEL EC3 - [200707_FederEC3]</h1>
          <button type="button" aria-label="Закрыть">
            <X size={15} strokeWidth={1.5} />
          </button>
        </div>
        <nav className="flex h-[18px] items-center gap-[15px] pl-[7px] leading-4">
          {["Файл", "Изменить", "Параметры", "Помощь"].map((m) => (
            <button key={m} type="button">
              {m}
            </button>
          ))}
        </nav>
      </header>

      <div className="mt-[3px] flex min-h-0 flex-1 border-b border-[#a0a0a0]">
        <div className="flex w-[177px] shrink-0 flex-col border-l-2 border-r border-t-2 border-[#a0a0a0] pt-[2px]">
          <label className="relative mb-px flex h-[21px] shrink-0 items-center border border-[#adadad] bg-[#e1e1e1]">
            <select aria-label="Расчетный случай" className="mr-[18px] h-full min-w-0 flex-1 appearance-none overflow-hidden bg-transparent pl-px font-[Liberation_Sans,sans-serif] outline-none">
              <option>PC1 - Bemessung nach Eurocod</option>
            </select>
            <ChevronDown size={12} strokeWidth={1.5} className="pointer-events-none absolute right-[3px]" />
          </label>
          <ul className="min-h-0 flex-1 overflow-hidden border-t border-[#a0a0a0] bg-[#fcfcf4] pl-1 pt-[1px]">
            {dialogTree.map((r, i) => (
              <li key={i} className="flex h-4 items-center whitespace-nowrap">
                {r.a && <Guide mark={r.a} h={16} />}
                {r.b && <Guide mark={r.b} h={16} />}
                <span className={clsx("leading-4", r.active && "bg-[#f0f0f0]")}>{r.text}</span>
              </li>
            ))}
          </ul>
          <HScroll thumb="ml-[2px] w-[116px]" />
          <div className="h-[2px] shrink-0" />
        </div>

        <div className="ml-[3px] mr-[4px] flex min-w-0 flex-1 flex-col border-r border-t-2 border-[#a0a0a0] pt-px">
          <h2 className="mr-px flex h-5 shrink-0 items-center bg-[#bfcbd9] pl-[2px] text-[12px]">
            1.7 Узловые опоры - блок стержней № 2 - Stabzug 1
          </h2>

          <div className="ml-2 mr-[7px] mt-[9px] shrink-0 border-b border-r border-[#a6a6ec] bg-[#f0f4f9]">
            <div className="flex">
              <div className="min-w-0 flex-1">
                <Grid
                  cols={supportCols}
                  groups={supportGroups}
                  rows={supportRows}
                  activeCol={1}
                  activeRow={1}
                  rowTint="bg-[#ebebeb]"
                  accent="bg-[#0078d7]"
                />
              </div>
              <VScroll className="ml-px">
                <span className="flex-[145] bg-[#cdcdcd]" />
                <span className="flex-[31]" />
              </VScroll>
            </div>
            <div className="flex h-[31px] items-center pl-[6px] pr-[3px]">
              <span className="flex-1" />
              <IconButton name="find" />
              <span className="flex flex-1 justify-end">
                <IconButton name="excelUp" />
                <span className="w-[5px]" />
                <IconButton name="excelDown" />
                <span className="w-[10px]" />
                <IconButton name="pickNode" />
                <span className="w-[10px]" />
                <IconButton name="eyeSmall" />
              </span>
            </div>
          </div>

          <div className="mb-[9px] ml-2 mr-[4px] mt-[9px] flex min-h-0 flex-1 gap-[10px]">
            <div className="flex w-[457px] shrink-0 flex-col border-b border-r border-[#a6a6ec] bg-[#f0f4f9]">
              <h3 className="h-[16px] shrink-0 bg-[#dbe5f5] pl-[2px] leading-4 text-[#1c4f80] [clip-path:polygon(0_0,calc(100%-9px)_0,100%_9px,100%_100%,0_100%)]">
                Параметры - узловая опора № 4
              </h3>
              <ParamTable />
              <div className="flex min-h-0 flex-1 flex-col justify-evenly pl-[3px]">
                <label className="flex items-center gap-[3px]">
                  <input
                    type="checkbox"
                    checked={all}
                    onChange={(e) => setAll(e.target.checked)}
                    className="h-[13px] w-[13px] appearance-none border border-[#333] bg-white checked:bg-[#555]"
                  />
                  Задать данные для опор №:
                </label>
                <div className="flex items-center">
                  <input
                    aria-label="Опоры №"
                    disabled
                    className="h-5 w-[336px] border border-[#cccccc] bg-[#f0f0f0]"
                  />
                  <label className="ml-[46px] flex items-center gap-[3px] text-[#6d6d6d]">
                    <span className="relative h-[13px] w-[13px]">
                      <input type="checkbox" disabled checked readOnly className="block h-[13px] w-[13px] appearance-none border border-[#bcbcbc] bg-white" />
                      <svg viewBox="0 0 13 13" className="absolute inset-0" aria-hidden="true">
                        <path d="M3 6l3 3 5-6" fill="none" stroke="#a0a0a0" strokeWidth="1.500" />
                      </svg>
                    </span>
                    Все
                  </label>
                </div>
              </div>
            </div>

            <div className="flex min-w-0 flex-1 flex-col border-b border-r border-[#a6a6ec] bg-[#f0f4f9]">
              <div className="flex min-h-0 flex-1 border-l border-t border-[#a0a0a0] bg-white">
                <SupportPreview />
              </div>
              <div className="flex h-[29px] shrink-0 items-center gap-[5px] pl-[3px] pr-[3px]">
                <IconButton name="render" />
                <IconButton name="solid" />
                <IconButton name="lens" />
                <IconButton name="blueWin" />
                <IconButton name="axesEye" active />
                <span className="flex-1" />
                <IconButton name="axX" />
                <IconButton name="axMY" />
                <IconButton name="axZ" />
                <span />
                <IconButton name="cube" />
              </div>
            </div>
          </div>
        </div>
      </div>

      <footer className="flex h-[39px] shrink-0 items-center border-b border-[#a0a0a0] pl-[9px] pr-[10px] pt-1">
        <IconButton name="help" />
        <span className="w-[9px]" />
        <IconButton name="pagePrev" />
        <span className="w-[5px]" />
        <IconButton name="pageNext" />
        <div className="ml-[82px] flex gap-[9px]">
          <PushButton className={clsx("w-[81px]", plain)}>Расчет</PushButton>
          <PushButton className={clsx("w-[81px]", plain)}>Подробности</PushButton>
          <PushButton className={clsx("w-[81px]", plain)}>Нац. прил...</PushButton>
        </div>
        <PushButton className={clsx("ml-[99px] w-[81px]", plain)}>Графика</PushButton>
        <div className="ml-auto flex gap-[9px]">
          <PushButton className="w-[73px] border-2 border-[#0078d7] bg-[#e1e1e1]">ОК</PushButton>
          <PushButton className={clsx("w-[73px]", plain)}>Отмена</PushButton>
        </div>
      </footer>
      <div className="h-[21px] shrink-0 border-b-2 border-white" />
    </section>
  );
}

/* ---------- model view ---------- */

const DOTS = [
  [171, 3], [280, 36], [607, 7], [717, 40], [826, 74], [1043, 11], [1152, 45],
  [63, 99], [63, 231], [63, 493], [63, 624], [63, 756],
  [1370, 113], [1370, 244], [1370, 375], [1370, 507], [1370, 638], [1370, 769],
];

function ModelView() {
  return (
    <main className="relative flex min-w-0 flex-1 flex-col justify-between overflow-hidden border-l-2 border-t-2 border-[#6c6c6c] bg-[#fcfcfc] px-1 pb-[5px] pt-[5px] font-[Roboto,sans-serif] leading-[14px] text-black">
      <svg className="absolute inset-0 h-full w-full" aria-hidden="true">
        {DOTS.map(([x, y]) => (
          <rect key={`${x}-${y}`} x={x} y={y} width="1" height="1" fill="#000" />
        ))}
        <path d="M390.500 0v60M0 343L1467 800" fill="none" stroke="#1a8c8c" />
        <path d="M364 91c0-12 4-18 12-20l12-3v24z" fill="#32e632" />
        <path d="M364 91c0-12 4-16 10-14 3 2 3 8 2 14z" fill="#78f078" />
        <path d="M390 66v34h160l-70-20z" fill="#1c1ce6" />
        <path d="M390 86l10-4 60 22h-70z" fill="#10107c" />
        <path d="M382 63l18-9 130 42h-45z" fill="#10107c" />
        <path d="M381 63v30M381 62l18-10 130 43M382 63l100 34M400 54v28l40 14" fill="none" stroke="#f01010" strokeDasharray="1 1" />
        <path d="M54 689l22 7" stroke="#f00" strokeWidth="1.500" />
        <path d="M78 693l8 6-9 1z" fill="#c00000" />
        <path d="M54 689l-16 6" stroke="#0f0" strokeWidth="1.500" />
        <path d="M35 694l-8 7 9 0z" fill="#00a000" />
        <path d="M54 689v30" stroke="#0ff" strokeWidth="1.500" />
        <path d="M51 717h6l-3 10z" fill="#00a0a0" />
        <g fontSize="9" fontFamily="Liberation Sans, sans-serif">
          <text x="20" y="707" fill="#0e0">Y</text>
          <text x="91" y="705" fill="#f00">X</text>
          <text x="52" y="739" fill="#0ee">Z</text>
        </g>
      </svg>
      <div className="relative">
        <p>Макс. Расч. соотн. [-]</p>
        <p>RF-STEEL EC3 PC1 - Bemessung nach Eurocode 3</p>
      </div>
      <p className="relative">Макс.Расч. соотн.: 0.41</p>
    </main>
  );
}

function ResultPanel() {
  return (
    <aside className="ml-[5px] flex w-[157px] shrink-0 flex-col">
      <div className="flex min-h-0 flex-1 flex-col border-x border-b border-[#a9b1bf] bg-[#f0f0f0]">
        <PaneHeader title="Панель" />
        <div className="flex flex-col border-t border-[#a5adbb] px-1 pt-[3px] font-[Liberation_Sans,sans-serif] leading-[17px] text-black">
          <p>Макс.</p>
          <p>Расч. соотн. [-]</p>
          <div className="flex border-b-2 border-l border-r-2 border-t border-[#a0a0a0] border-b-white border-r-white bg-[#fbf8f1] pb-[9px] pl-[43px] pt-[10px]">
            <div className="h-[194px] w-[27px] border border-black bg-[#0000ff]" />
            <div className="w-[6px] border-y border-black" />
            <div className="-my-2 ml-1 flex flex-col justify-between">
              <span>0.41</span>
              <span>0.00</span>
            </div>
          </div>
          <dl className="mt-[9px] grid grid-cols-[38px_1fr] border-b border-r border-[#a6a6ec] bg-[#f0f4fa] pl-[44px]">
            <dt>Макс.:</dt>
            <dd>0.41</dd>
            <dt>Мин.:</dt>
            <dd>0.00</dd>
          </dl>
          <button type="button" disabled className="mx-1 mt-5 h-[23px] border border-[#bfbfbf] bg-[#cccccc] text-[#838383]">
            RF-STEEL EC3
          </button>
          <div className="mt-[94px] flex justify-end">
            <IconButton name="find" />
          </div>
        </div>
      </div>
      <div className="flex h-[24px] shrink-0 items-start gap-2 pl-[3px]">
        <span className="flex h-[21px] w-[22px] items-center justify-center rounded-b border border-t-0 border-[#b6c8cc] bg-[#f4f6fa]">
          <Icon name="legendBars" size={15} />
        </span>
        <span className="flex h-[21px] w-[22px] items-center justify-center">
          <Icon name="scales" />
        </span>
        <span className="flex h-[21px] w-[22px] items-center justify-center">
          <Icon name="microscope" />
        </span>
      </div>
    </aside>
  );
}

/* ---------- bottom table ---------- */

const tableCols: Col[] = [
  { w: "w-[163px]", unit: "На узлах №", align: "text-left" },
  { w: "w-[114px]", unit: "Система координат", align: "text-left" },
  { w: "w-[60px]", unit: "по Z" },
  { w: "w-[72px]", unit: <Sub base="u" sub="X" /> },
  { w: "w-[72px]", unit: <Sub base="u" sub="Y" /> },
  { w: "w-[72px]", unit: <Sub base="u" sub="Z" /> },
  { w: "w-[72px]", unit: <Sub base="φ" sub="X" /> },
  { w: "w-[72px]", unit: <Sub base="φ" sub="Y" /> },
  { w: "w-[72px]", unit: <Sub base="φ" sub="Z" /> },
  { unit: "Комментарий" },
];

const tableGroups: Group[] = [
  { label: "", span: 1 },
  { label: "", span: 1 },
  { label: "Колонна", span: 1 },
  { label: "Опора или пружина [kН/м]", span: 3 },
  { label: "Заделка с поворотом или пружина [kНм/р", span: 3 },
  { label: "", span: 1 },
];

const marks = (row: number, s: string) =>
  s.split("").map((c, i) => (c === "v" ? "10.000" : <Check key={i} label={`Опора ${row} ${i}`} on={c === "1"} />));

const tableRows: ReactNode[][] = [
  ["1,3", "Общие X,Y,Z", ...marks(1, "0111101")],
  ["4", "Общие X,Y,Z", ...marks(2, "00v1101")],
  ["2", "Общие X,Y,Z", ...marks(3, "0011101")],
  [],
];

const sheetTabs = [
  "Узлы", "Линии", "Материалы", "Поверхности", "Тела", "Отверст.", "Узловые опоры", "Линейные опоры",
  "Опоры поверхностей", "Линейные шарниры", "Сечения", "Шарниры стержней", "Эксцентриситеты стержня",
  "Дробления стержней", "Стержни", "Упругие основания стержня", "Нелинейности стержня",
];

const sheetTools = [
  "grTri*", "grPM", "grDown", "grRamp", "grWave", "|", "grPlain", "grPlain", "|", "swirl*", "swirl*", "swirlOff", "|",
  "grPlain", "grPlain", "grPlain", "|", "grPlain", "|", "rowDel", "rowDel", "rowDel", "|", "grPlain", "grPlain", "|",
  "grPlain", "|", "list", "cogs", "excel", "abacus", "|",
];

function TableDock() {
  const [tab, setTab] = useState("Узловые опоры");
  return (
    <section className="mt-[6px] flex h-[205px] shrink-0 flex-col bg-[#f0f0f0]">
      <PaneHeader title="1.7 Узловые опоры" />
      <div className="flex h-[25px] shrink-0 items-center border-b border-[#c2c8d4] bg-gradient-to-b from-[#eceff7] to-[#c9cfdb] pl-[9px]">
        {sheetTools.map((s, i) => (
          <ToolItem key={i} spec={s} />
        ))}
        <span className="mt-2 flex gap-3 pl-1 font-[Liberation_Serif,serif] italic text-[#444]">
          <span>ab=</span>
          <span>fx</span>
          <span>ˣfx</span>
        </span>
      </div>
      <div className="flex shrink-0 border-l-2 border-t-2 border-[#6c6c6c] pb-2 pt-px font-[Liberation_Sans,sans-serif] text-black">
        <div className="min-w-0 flex-1">
          <Grid cols={tableCols} groups={tableGroups} rows={tableRows} activeCol={0} activeRow={0} accent="bg-[#3399ff]" />
        </div>
        <VScroll className="ml-px mr-[3px]">
          <span className="flex-1 bg-[#cdcdcd]" />
        </VScroll>
      </div>
      <div className="flex h-[18px] shrink-0 justify-between border-t-2 border-[#6c6c6c] font-[Liberation_Sans,sans-serif] text-black">
        <div className="flex min-w-0">
          {sheetTabs.map((t) => (
            <button
              key={t}
              type="button"
              onClick={() => setTab(t)}
              className={clsx(
                "shrink-0 whitespace-nowrap rounded-b-[3px] border-b border-r border-[#555] pl-[5px] pr-1 leading-4",
                tab === t ? "-mt-[2px] bg-[#f0f0f0]" : "bg-[#e4e4e4]",
              )}
            >
              {t}
            </button>
          ))}
        </div>
        <div className="flex shrink-0">
          {["M4 3v8M11 3v8L6 7z", "M9 3v8L5 7z", "M6 3v8l4-4z", "M4 3v8l5-4zM10 3v8"].map((d, i) => (
            <button key={d} type="button" aria-label={"Лист " + (i + 1)} className="flex w-[15px] items-center justify-center border border-[#999] border-l-white border-t-white">
              <svg width="13" height="14" aria-hidden="true">
                <path d={d} fill={i < 2 ? "#999" : "#000"} stroke={i < 2 ? "#999" : "#000"} />
              </svg>
            </button>
          ))}
        </div>
      </div>
    </section>
  );
}

/* ---------- application frame ---------- */

const menus = [
  ["", "Ф", "айл"], ["", "И", "зменить"], ["И", "з", "образить"], ["", "В", "ставить"], ["Р", "а", "счет"], ["", "Р", "езультаты"],
  ["И", "н", "струменты"], ["", "Т", "аблица"], ["В", "о", "зможности"], ["", "Д", "ополнительные модули"], ["", "О", "кно"], ["", "П", "омощь"],
];

export default function App() {
  return (
    <div className="relative flex h-screen w-full flex-col overflow-hidden bg-[#cfd3dd] font-[Open_Sans,sans-serif] text-[11px]">
      <header className="shrink-0">
        <div className="flex h-[23px] items-center bg-white pl-[2px] text-[#8b8b8b]">
          <Icon name="app" />
          <h1 className="ml-[5px]">RFEM 5.22.01 x64 - [200707_FederEC3*]</h1>
          <span className="ml-auto flex items-center gap-[33px] pr-[18px]">
            <button type="button" aria-label="Свернуть"><Minus size={12} strokeWidth={1.5} /></button>
            <button type="button" aria-label="Восстановить">
              <svg width="11" height="11" aria-hidden="true">
                <path d="M.5 3.500h7v7h-7zM3 3V.5h7.500V8H8" fill="none" stroke="#888" />
              </svg>
            </button>
            <button type="button" aria-label="Закрыть"><X size={15} strokeWidth={1.5} /></button>
          </span>
        </div>
        <nav className="flex h-6 items-center pl-1 text-[#4a4f5a]">
          <span className="mr-[4px] h-4 border-l-2 border-dotted border-[#9aa2b2]" />
          <Icon name="bridge" />
          <div className="ml-[9px] flex gap-[14px]">
            {menus.map(([a, u, b]) => (
              <button key={a + u + b} type="button" className="whitespace-nowrap">
                {a}
                <span className="underline">{u}</span>
                {b}
              </button>
            ))}
          </div>
          <span className="ml-auto flex items-center gap-[5px] pr-[5px] pt-2">
            <Minus size={10} />
            <svg width="9" height="9" aria-hidden="true">
              <path d="M.5 2.500h6v6h-6zM2.500 2V.5h6v6H7" fill="none" stroke="#555" />
            </svg>
            <X size={10} />
          </span>
        </nav>
        <div className="flex h-[26px]">
          <Bar
            items={["new", "open", "cabOrange", "cabBlue", "save", "report", "print", "preview", "|", "undo", "redo", "|", "poly", "pick", "ring", "selpm", "selwin", "|", "list*", "tableIcon*", "|", "loadstar"]}
            after={["prev", "next", "eyeDown", "xxxDown", "eye*", "xxx*", "|", "glasses", "abacusDoc", "abacus"]}
          >
            <label className="ml-[3px] mr-[3px] flex h-[18px] w-[214px] items-center border border-white bg-white">
              <select aria-label="Загружение" className="h-full min-w-0 flex-1 appearance-none bg-transparent pl-[2px] font-[Open_Sans,sans-serif] text-black outline-none">
                <option>RF-STEEL EC3 PC1 - Bemessung nach E</option>
              </select>
              <svg width="14" height="16" className="shrink-0 bg-[#dfe3ec]" aria-hidden="true">
                <path d="M4 6h6L7 9z" fill="#6c7484" />
              </svg>
            </label>
          </Bar>
          <Bar items={["gridHand", "gridPoint", "planeX", "planeY", "planeZ*", "net", "axesDoc", "|", "chain", "rotate", "mirror", "explode", "info", "gear", "cogs"]} />
          <Bar items={["down1", "up1", "red1", "red2"]} />
        </div>
        <div className="flex h-[27px]">
          <Bar
            items={[
              "node v", "line", "member v", "opening v", "|", "support", "hinge", "surface", "|", "dim v", "dimXX", "guide", "|",
              "rectLoad v", "frame v", "fold v", "block", "block2 v", "|", "comb v", "load1", "load2", "load3", "load4", "cubeLoad v",
            ]}
          />
          <Bar items={["hand", "zoomRect", "zoomX", "cube", "cubes", "|", "axX", "axY", "axZ", "axMX v", "scope v", "|", "solid v"]} />
          <Bar
            items={[
              "portal", "conveyor", "|", "beamI~", "rainbow", "rainbow2", "greenArrows", "blade", "squares v", "iWave", "tables", "|",
              "legend*", "lamps v", "palette v",
            ]}
          />
        </div>
      </header>

      <div className="flex min-h-0 flex-1">
        <Navigator />
        <div className="flex min-w-0 flex-1 flex-col">
          <div className="flex min-h-0 flex-1">
            <ModelView />
            <ResultPanel />
          </div>
          <TableDock />
        </div>
      </div>

      <Dialog />
    </div>
  );
}
